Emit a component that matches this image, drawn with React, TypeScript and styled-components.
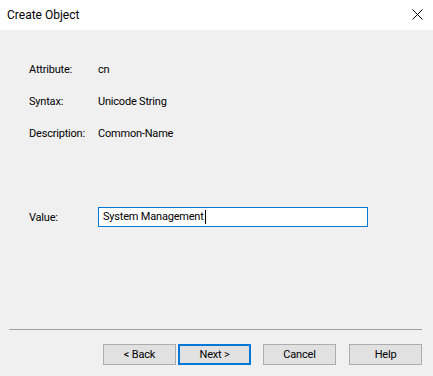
import React from "react";
import styled, { createGlobalStyle } from "styled-components";

const Global = createGlobalStyle`
  html, body { margin: 0; padding: 0; background: #f0f0f0; }
  body { font-family: Roboto, "Noto Sans", "Liberation Sans", sans-serif; font-size: 11px; letter-spacing: -0.2px; color: #000; }
  * { box-sizing: border-box; }
`;

const Window = styled.div`
  width: 433px;
  height: 376px;
  display: flex;
  flex-direction: column;
  background: #f0f0f0;
  overflow: hidden;
`;

const TitleBar = styled.div`
  height: 30px;
  flex: none;
  background: #fff;
  display: flex;
  align-items: center;
  justify-content: space-between;
  padding: 0 10px 1px 7px;
`;

const Title = styled.span`
  font-size: 12px;
  letter-spacing: 0;
  line-height: 16px;
`;

const CloseButton = styled.div`
  width: 12px;
  height: 12px;
  display: flex;
  align-items: center;
  justify-content: center;
`;

const Body = styled.div`
  flex: 1;
  display: flex;
  flex-direction: column;
  padding-top: 31px;
`;

const Fields = styled.div`
  display: grid;
  grid-template-columns: 69px 1fr;
  row-gap: 15px;
  padding-left: 29px;
`;

const Label = styled.div`
  height: 17px;
  line-height: 17px;
`;

const Val = styled.div`
  height: 17px;
  line-height: 17px;
`;

const ValueRow = styled.div`
  display: grid;
  grid-template-columns: 69px 270px;
  align-items: center;
  padding-left: 29px;
  margin-top: 65px;
`;

const TextBox = styled.div`
  height: 20px;
  border: 1px solid #0078d7;
  background: #fff;
  padding-left: 4px;
  display: flex;
  align-items: center;
  line-height: 16px;
`;

const Caret = styled.span`
  display: inline-block;
  width: 1px;
  height: 14px;
  background: #000;
  margin-left: 1px;
`;

const Spacer = styled.div`
  flex: 1;
`;

const Separator = styled.div`
  margin: 0 11px 0 9px;
  height: 1px;
  background: #a0a0a0;
`;

const ButtonBar = styled.div`
  display: flex;
  justify-content: flex-end;
  padding: 14px 11px 11px 0;
`;

const Button = styled.div<{ $primary?: boolean; $gap: number }>`
  width: 73px;
  height: 21px;
  margin-left: ${(p) => p.$gap}px;
  background: #e1e1e1;
  border: ${(p) => (p.$primary ? "2px solid #0078d7" : "1px solid #adadad")};
  display: flex;
  align-items: center;
  justify-content: center;
  line-height: 16px;
`;

export default function App() {
  return (
    <Window>
      <Global />
      <TitleBar>
        <Title>Create Object</Title>
        <CloseButton>
          <svg width="11" height="11" viewBox="0 0 11 11">
            <path d="M0.5 0.5 L10.5 10.5 M10.5 0.5 L0.5 10.5" stroke="#000" strokeWidth="1" fill="none" />
          </svg>
        </CloseButton>
      </TitleBar>
      <Body>
        <Fields>
          <Label>Attribute:</Label>
          <Val>cn</Val>
          <Label>Syntax:</Label>
          <Val>Unicode String</Val>
          <Label>Description:</Label>
          <Val>Common-Name</Val>
        </Fields>
        <ValueRow>
          <Label>Value:</Label>
          <TextBox>
            System Management
            <Caret />
          </TextBox>
        </ValueRow>
        <Spacer />
        <Separator />
        <ButtonBar>
          <Button $gap={0}>&lt; Back</Button>
          <Button $gap={2} $primary>Next &gt;</Button>
          <Button $gap={12}>Cancel</Button>
          <Button $gap={13}>Help</Button>
        </ButtonBar>
      </Body>
    </Window>
  );
}
